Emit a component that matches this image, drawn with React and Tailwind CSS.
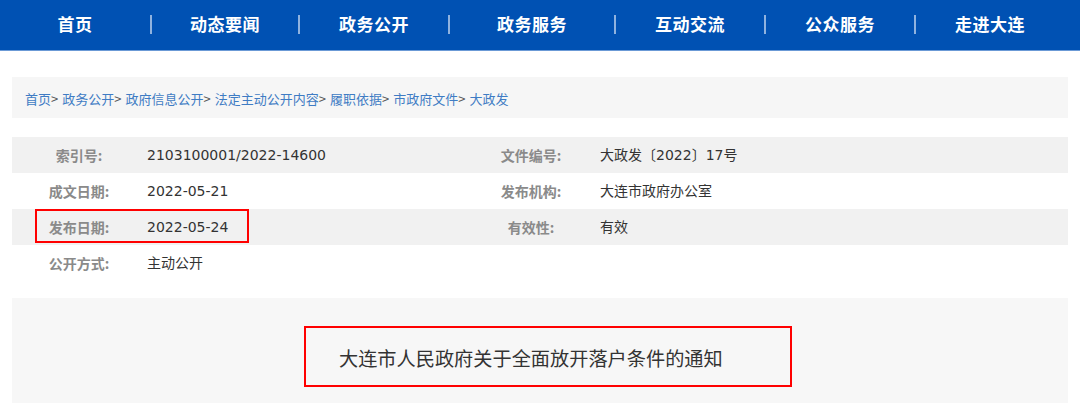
import React from "react";

const navItems = [
  { label: "首页", w: "w-[150px]" },
  { label: "动态要闻", w: "w-[148px]" },
  { label: "政务公开", w: "w-[150px]" },
  { label: "政务服务", w: "w-[166px]" },
  { label: "互动交流", w: "w-[150px]" },
  { label: "公众服务", w: "w-[150px]" },
  { label: "走进大连", w: "w-[150px]" },
];

const crumbs = ["首页", "政务公开", "政府信息公开", "法定主动公开内容", "履职依据", "市政府文件", "大政发"];

const rows = [
  { l1: "索引号:", v1: "2103100001/2022-14600", l2: "文件编号:", v2: "大政发〔2022〕17号", gray: true },
  { l1: "成文日期:", v1: "2022-05-21", l2: "发布机构:", v2: "大连市政府办公室" },
  { l1: "发布日期:", v1: "2022-05-24", l2: "有效性:", v2: "有效", gray: true, mark: true },
  { l1: "公开方式:", v1: "主动公开", l2: "", v2: "" },
];

const App = () => {
  return (
    <div className="w-[1080px] h-[403px] overflow-hidden bg-white font-['Microsoft_YaHei','Noto_Sans_CJK_SC',sans-serif]">
      {/* top nav */}
      <div className="h-[50px] bg-[#0051b3] border-b border-[#6b9ad6] box-content">
        <div className="flex h-full">
          {navItems.map((item, i) => (
            <div key={i} className={`${item.w} h-full flex items-center`}>
              {i > 0 && <div className="w-[2px] h-[19px] bg-[#8fb2df] -mt-[2px]" />}
              <div className="flex-1 text-center text-white text-[17px] font-bold tracking-[0.5px] -mt-[2px]">
                {item.label}
              </div>
            </div>
          ))}
        </div>
      </div>

      <div className="px-[12px]">
        {/* breadcrumb */}
        <div className="mt-[26px] h-[41px] bg-[#f6f6f6] flex items-center pl-[13px] text-[13px] pt-[3px]">
          {crumbs.map((c, i) => (
            <span key={i} className="flex items-center">
              <span className="text-[#3f7cc4]">{c}</span>
              {i < crumbs.length - 1 && <span className="text-[#555] mr-[4px]">&gt;</span>}
            </span>
          ))}
        </div>

        {/* info table */}
        <div className="mt-[19px] text-[14px]">
          {rows.map((r, i) => (
            <div key={i} className={`relative h-[36px] flex items-center ${r.gray ? "bg-[#f1f1f1]" : "bg-white"}`}>
              <div className="w-[134px] text-center text-[#8a8a8a] font-bold">{r.l1}</div>
              <div className="w-[316px] text-[#333] pl-[1px] font-['DejaVu_Sans','Noto_Sans_CJK_SC',sans-serif]">{r.v1}</div>
              <div className="w-[138px] text-center text-[#8a8a8a] font-bold">{r.l2}</div>
              <div className="flex-1 text-[#333] font-['DejaVu_Sans','Noto_Sans_CJK_SC',sans-serif]">{r.v2}</div>
              {r.mark && (
                <div className="absolute left-[23px] top-0 w-[214px] h-[34px] border-2 border-[#ff0000]" />
              )}
            </div>
          ))}
        </div>

        {/* title */}
        <div className="mt-[17px] h-[110px] bg-[#f7f7f7] pt-[28px] pl-[292px]">
          <div className="w-[488px] h-[61px] border-2 border-[#ff0000] flex items-center pl-[33px] pt-[4px] text-[19.2px] text-[#333]">
            大连市人民政府关于全面放开落户条件的通知
          </div>
        </div>
      </div>
    </div>
  );
};

export default App;
